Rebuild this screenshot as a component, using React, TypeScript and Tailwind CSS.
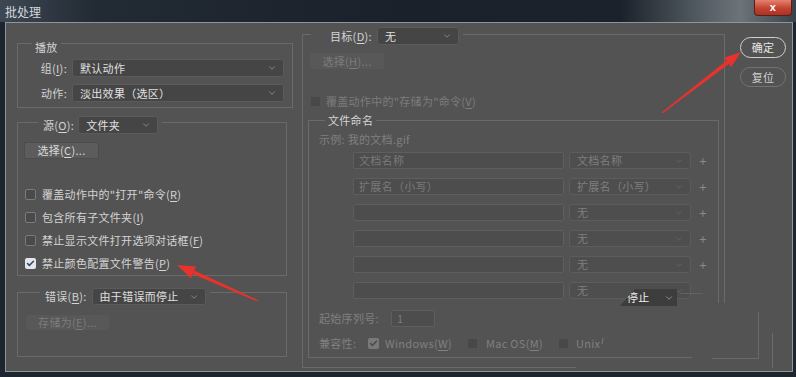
import { Check, ChevronDown } from "lucide-react";

// ---------------------------------------------------------------------------
// small pieces
// ---------------------------------------------------------------------------

function Mn({ c }: { c: string }) {
  return <span className="underline decoration-1 underline-offset-[2px]">{c}</span>;
}

interface SelectProps {
  value: string;
  className?: string;
  disabled?: boolean;
}

function Select({ value, className = "", disabled = false }: SelectProps) {
  return (
    <div
      className={`flex items-center rounded-[3px] border ${
        disabled
          ? "border-[#5c5c5c] bg-[#4e4e4e] text-[#7e7e7e]"
          : "border-[#5a5a5a] bg-[#454545] text-[#e0e0e0]"
      } ${className}`}
    >
      <span className="flex-1 truncate pl-[7px]">{value}</span>
      <ChevronDown
        className={`mr-[6px] h-[10px] w-[10px] ${disabled ? "text-[#6e6e6e]" : "text-[#a8a8a8]"}`}
        strokeWidth={1.5}
      />
    </div>
  );
}

function Box({ checked = false, dim = false }: { checked?: boolean; dim?: boolean }) {
  if (checked) {
    return (
      <span
        className={`flex h-[11px] w-[11px] shrink-0 items-center justify-center rounded-[2px] ${
          dim ? "bg-[#797979]" : "bg-[#e4e6ea]"
        }`}
      >
        <Check
          className={`h-[9px] w-[9px] ${dim ? "text-[#4c4c4c]" : "text-[#2b4a72]"}`}
          strokeWidth={4}
        />
      </span>
    );
  }
  return (
    <span
      className={`h-[11px] w-[11px] shrink-0 rounded-[2px] border ${
        dim ? "border-[#4b4b4b] bg-[#484848]" : "border-[#7a7a7a] bg-[#4a4a4a]"
      }`}
    />
  );
}

function Btn({ children, className = "", disabled = false }: { children: React.ReactNode; className?: string; disabled?: boolean }) {
  return (
    <div
      className={`flex items-center justify-center rounded-[2px] ${
        disabled ? "bg-[#585858] text-[#7c7c7c]" : "border border-[#4c4c4c] bg-[#5c5c5c] text-[#dadada]"
      } ${className}`}
    >
      {children}
    </div>
  );
}

const names = [
  { field: "文档名称", pick: "文档名称" },
  { field: "扩展名（小写）", pick: "扩展名（小写）" },
  { field: "", pick: "无" },
  { field: "", pick: "无" },
  { field: "", pick: "无" },
  { field: "", pick: "无" },
];

// ---------------------------------------------------------------------------
// App
// ---------------------------------------------------------------------------

export default function App() {
  return (
    <div className="relative flex h-[377px] w-[796px] flex-col overflow-hidden bg-[#1d252e] font-['Noto_Sans_CJK_SC','Noto_Sans',sans-serif] text-[11px] tracking-[0.3px]">
      {/* title bar */}
      <div className="flex h-[22px] shrink-0 items-start justify-between bg-[linear-gradient(90deg,#3e4853_0%,#222a33_12%,#1a212a_50%,#1b222b_78%,#545c63_88%,#6c7379_93%,#39424b_100%)]">
        <span className="ml-[5px] mt-[3px] text-[12px] tracking-normal text-[#d3d9de]">批处理</span>
        <div className="mr-[4px] flex h-[16px] w-[38px] items-center justify-center rounded-b-[4px] border border-t-0 border-[#5a1f1a] bg-[linear-gradient(180deg,#e4826f,#c4432f_55%,#a83224)] font-['Liberation_Sans',sans-serif] text-[11px] font-bold text-white">
          x
        </div>
      </div>

      {/* dialog body */}
      <div className="ml-[5px] mr-[3px] flex h-[350px] border border-[#8e959b] bg-[#535353] text-[#d4d4d4]">
        {/* left column */}
        <div className="ml-[11px] flex w-[276px] flex-col">
          <fieldset className="mt-[9px] w-[276px] border border-[#6a6a6a]">
            <legend className="ml-[14px] px-[3px] pt-[8px] leading-[14px]">播放</legend>
            <div className="flex flex-col gap-[7px] py-[5px] pr-[8px]">
              <div className="flex items-center">
                <span className="mr-[5px] w-[49px] text-right">
                  组(<Mn c="I" />):
                </span>
                <Select value="默认动作" className="h-[18px] flex-1" />
              </div>
              <div className="flex items-center">
                <span className="mr-[5px] w-[49px] text-right">动作:</span>
                <Select value="淡出效果（选区）" className="h-[18px] flex-1" />
              </div>
            </div>
          </fieldset>

          <fieldset className="mt-[2px] w-[270px] border border-[#6a6a6a]">
            <legend className="ml-[20px] pl-[5px] pr-[4px] pt-[6px]">
              <div className="flex items-center">
                <span className="mr-[4px]">
                  源(<Mn c="O" />):
                </span>
                <Select value="文件夹" className="h-[18px] w-[80px]" />
              </div>
            </legend>
            <div className="flex flex-col pl-[6px] pt-[8px]">
              <Btn className="h-[17px] w-[75px]">
                选择(<Mn c="C" />)...
              </Btn>
              <div className="mt-[24px] flex flex-col">
                <div className="flex h-[23px] items-center gap-[6px] pl-[1px]">
                  <Box />
                  <span>
                    覆盖动作中的"打开"命令(<Mn c="R" />)
                  </span>
                </div>
                <div className="flex h-[23px] items-center gap-[6px] pl-[1px]">
                  <Box />
                  <span>
                    包含所有子文件夹(<Mn c="I" />)
                  </span>
                </div>
                <div className="flex h-[23px] items-center gap-[6px] pl-[1px]">
                  <Box />
                  <span>
                    禁止显示文件打开选项对话框(<Mn c="F" />)
                  </span>
                </div>
                <div className="flex h-[23px] items-center gap-[6px] pl-[1px]">
                  <Box checked />
                  <span>
                    禁止颜色配置文件警告(<Mn c="P" />)
                  </span>
                </div>
              </div>
            </div>
          </fieldset>

          <fieldset className="mt-[4px] w-[270px] border border-[#6a6a6a]">
            <legend className="ml-[22px] pl-[5px] pr-[4px] pt-[8px]">
              <div className="flex items-center">
                <span className="mr-[5px]">
                  错误(<Mn c="B" />):
                </span>
                <Select value="由于错误而停止" className="h-[17px] w-[114px]" />
              </div>
            </legend>
            <div className="pb-[26px] pl-[8px] pt-[10px]">
              <Btn disabled className="h-[15px] w-[83px]">
                存储为(<Mn c="E" />)...
              </Btn>
            </div>
          </fieldset>
        </div>

        {/* right column */}
        <fieldset className="ml-[9px] h-[345px] w-[423px] border border-[#6a6a6a]">
          <legend className="ml-[8px] pl-[19px] pr-[4px] pt-[4px]">
            <div className="flex items-center">
              <span className="mr-[5px]">
                目标(<Mn c="D" />):
              </span>
              <Select value="无" className="h-[18px] w-[82px]" />
            </div>
          </legend>
          <div className="flex flex-col pl-[7px] pt-[8px]">
            <Btn disabled className="h-[16px] w-[74px]">
              选择(<Mn c="H" />)...
            </Btn>
            <div className="mt-[25px] flex h-[14px] items-center gap-[6px] pl-[1px] text-[#7c7c7c]">
              <span className="h-[9px] w-[9px] shrink-0 bg-[#484848]" />
              <span>
                覆盖动作中的"存储为"命令(<Mn c="V" />)
              </span>
            </div>
          </div>

          <fieldset className="ml-[5px] mt-[5px] w-[411px] border border-[#6a6a6a]">
            <legend className="ml-[16px] px-[3px] leading-[14px]">文件命名</legend>
            <div className="flex flex-col pb-[7px] pl-[10px] pt-[5px] text-[#808080]">
              <div className="h-[14px] leading-[14px]">示例: 我的文档.gif</div>
              <div className="ml-[34px] mt-[6px] flex flex-col gap-[9px]">
                {names.map((n, i) => (
                  <div key={i} className="flex h-[17px] items-center">
                    <div className="flex h-[17px] w-[211px] items-center rounded-[2px] border border-[#5e5e5e] bg-[#4d4d4d] pl-[5px] text-[#7a7a7a]">
                      {n.field}
                    </div>
                    <Select disabled value={n.pick} className="ml-[5px] h-[17px] w-[122px]" />
                    <span className="w-[24px] text-center text-[13px] leading-none text-[#8a8a8a]">+</span>
                  </div>
                ))}
              </div>
              <div className="mt-[11px] flex h-[17px] items-center">
                <span className="w-[72px]">起始序列号:</span>
                <div className="flex h-[17px] w-[44px] items-center rounded-[2px] border border-[#5e5e5e] bg-[#4d4d4d] pl-[5px] text-[#7a7a7a]">
                  1
                </div>
              </div>
              <div className="mt-[9px] flex h-[14px] items-center">
                <span className="w-[49px]">兼容性:</span>
                <Box checked dim />
                <span className="ml-[6px]">
                  Windows(<Mn c="W" />)
                </span>
                <span className="ml-[16px] h-[9px] w-[9px] bg-[#484848]" />
                <span className="ml-[9px]">
                  Mac OS(<Mn c="M" />)
                </span>
                <span className="ml-[16px] h-[9px] w-[9px] bg-[#484848]" />
                <span className="ml-[8px]">Unix</span>
                <span className="ml-[2px] h-[6px] w-px -skew-x-12 self-start mt-[2px] bg-[#7a7a7a]" />
              </div>
            </div>
          </fieldset>
        </fieldset>

        {/* buttons */}
        <div className="ml-[15px] mt-[14px] flex flex-col">
          <div className="flex h-[21px] w-[46px] items-center justify-center rounded-full border-[1.5px] border-[#d0d0d0] text-[#e6e6e6]">
            确定
          </div>
          <div className="mt-[9px] flex h-[20px] w-[46px] items-center justify-center rounded-full border border-[#727272] text-[#d0d0d0]">
            复位
          </div>
        </div>
      </div>

      {/* redraw glitches in the lower right corner */}
      <div className="absolute left-[692px] top-[284px] h-[19px] w-[22px] bg-[#535353]" />
      <div className="absolute left-[692px] top-[303px] h-[68px] w-[99px] bg-[#535353]" />
      <div className="absolute left-[576px] top-[365px] h-[5px] w-[150px] bg-[#535353]" />
      <div className="absolute left-[680px] top-[293px] h-px w-[23px] bg-[#626262]" />
      <div className="absolute left-[712px] top-[358px] h-px w-[47px] bg-[#6a6a6a]" />
      <div className="absolute left-[758px] top-[312px] h-[47px] w-px bg-[#6a6a6a]" />
      <div className="absolute left-[772px] top-[333px] h-[35px] w-px bg-[#6a6a6a]" />
      <div className="absolute left-[620px] top-[289px] flex h-[17px] w-[57px] items-center bg-[#3d3d3d] text-[#f0f0f0] [clip-path:polygon(15px_0,100%_0,100%_100%,0_100%)]">
        <span className="ml-[7px] flex-1">停止</span>
        <ChevronDown className="mr-[3px] h-[10px] w-[10px] text-[#c0c0c0]" strokeWidth={1.5} />
      </div>

      {/* red arrows */}
      <svg className="pointer-events-none absolute left-0 top-0" width="796" height="377" viewBox="0 0 796 377">
        <polygon points="661.6,112.4 726.4,60.8 728.8,64 662.4,113.6" fill="#e8322c" />
        <polygon points="741,52 723.9,57.7 731.3,67.1" fill="#e8322c" />
        <polygon points="258.3,300.4 194.3,270.5 192.7,274.1 257.7,301.6" fill="#e8322c" />
        <polygon points="177,265 196.1,266.4 190.9,278.2" fill="#e8322c" />
      </svg>
    </div>
  );
}
